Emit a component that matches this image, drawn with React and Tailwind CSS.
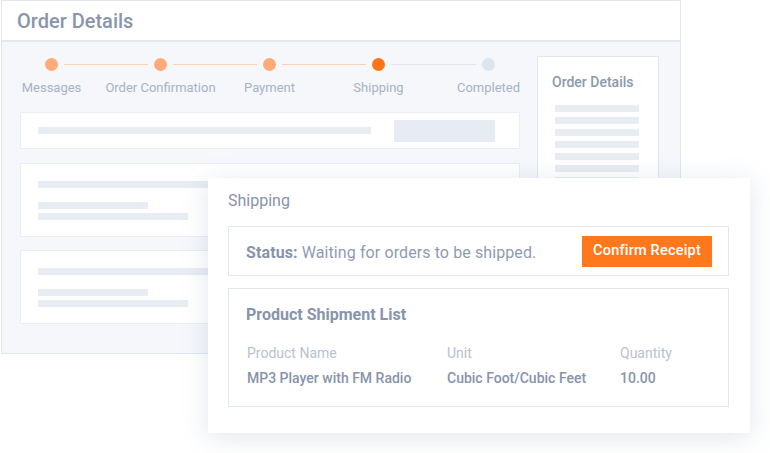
import React from 'react';

const steps = [
  { label: 'Messages', state: 'done' },
  { label: 'Order Confirmation', state: 'done' },
  { label: 'Payment', state: 'done' },
  { label: 'Shipping', state: 'active' },
  { label: 'Completed', state: 'todo' },
];

const dotColor = {
  done: 'bg-[#fdab78]',
  active: 'bg-[#ff7417]',
  todo: 'bg-[#dee4ee]',
};

function Bar({ className }) {
  return <div className={`h-[7px] bg-[#e8ecf3] ${className}`} />;
}

function Stepper() {
  return (
    <div className="flex items-start pl-[25px]">
      {steps.map((s, i) => (
        <React.Fragment key={s.label}>
          <div className="flex w-[13px] flex-col items-center">
            <div className={`h-[13px] w-[13px] rounded-full ${dotColor[s.state]}`} />
            <div className="mt-[9px] whitespace-nowrap text-[13px] leading-4 text-[#a9b2c3]">{s.label}</div>
          </div>
          {i < steps.length - 1 && (
            <div className={`mx-[6px] mt-[6px] h-px ${i === 3 ? 'w-[85px]' : 'w-[84px]'} ${i === 3 ? 'bg-[#e1e6ee]' : 'bg-[#fbd2b4]'}`} />
          )}
        </React.Fragment>
      ))}
    </div>
  );
}

function PlaceholderCard() {
  return (
    <div className="h-[74px] border border-[#e9edf4] bg-white px-[17px] pt-[17px]">
      <Bar className="w-[333px]" />
      <Bar className="mt-[14px] w-[110px]" />
      <Bar className="mt-[4px] w-[150px]" />
    </div>
  );
}

function BackWindow() {
  return (
    <div className="absolute left-[1px] top-0 h-[354px] w-[680px] border border-[#e1e6ef] bg-[#f5f7fb]">
      <div className="flex h-[41px] items-center border-b-2 border-[#e3e7ee] bg-white pl-[15px]">
        <h1 className="text-[20px] font-medium text-[#8995aa]">Order Details</h1>
      </div>
      <div className="flex gap-[17px] pl-[18px] pt-[14px]">
        <div className="w-[500px]">
          <div className="pt-[2px]">
            <Stepper />
          </div>
          <div className="mt-[16px] flex h-[37px] items-center border border-[#e9edf4] bg-white pl-[17px] pr-[24px]">
            <Bar className="w-[333px]" />
            <div className="ml-auto h-[22px] w-[101px] bg-[#e7ebf3]" />
          </div>
          <div className="mt-[14px] flex flex-col gap-[13px]">
            <PlaceholderCard />
            <PlaceholderCard />
          </div>
        </div>
        <div className="h-[266px] w-[122px] border border-[#e1e6ef] bg-white pl-[14px] pt-[15px]">
          <div className="text-[14px] font-medium text-[#8c98ad]">Order Details</div>
          <div className="mt-[12px] flex flex-col gap-[5px] pl-[3px]">
            {Array.from({ length: 8 }).map((_, i) => (
              <Bar key={i} className="w-[84px]" />
            ))}
          </div>
        </div>
      </div>
    </div>
  );
}

function ShippingPanel() {
  return (
    <div className="absolute left-[208px] top-[178px] h-[255px] w-[542px] bg-white pl-[20px] pr-[21px] pt-[13px] shadow-[0_4px_24px_rgba(120,135,165,0.22)]">
      <div className="text-[16px] leading-5 text-[#8794aa]">Shipping</div>
      <div className="mt-[15px] flex h-[50px] items-center justify-between border border-[#e1e6ef] pl-[17px] pr-[16px]">
        <div className="pt-[3px] text-[16px] tracking-[0.1px] text-[#8f9bb0]">
          <span className="font-bold text-[#8794aa]">Status:</span> Waiting for orders to be shipped.
        </div>
        <button className="h-[31px] w-[130px] bg-[#ff781c] text-[14.5px] font-medium tracking-[0.2px] text-white">Confirm Receipt</button>
      </div>
      <div className="mt-[12px] h-[119px] border border-[#e1e6ef] pl-[17px] pt-[14px]">
        <div className="text-[16px] font-bold text-[#8794aa]">Product Shipment List</div>
        <div className="mt-[16px] grid grid-cols-[200px_173px_1fr] pl-[1px] text-[14px] leading-5">
          <div className="text-[#b9c1cf]">Product Name</div>
          <div className="text-[#b9c1cf]">Unit</div>
          <div className="text-[#b9c1cf]">Quantity</div>
          <div className="mt-[5px] font-medium text-[#8794aa]">MP3 Player with FM Radio</div>
          <div className="mt-[5px] font-medium text-[#8794aa]">Cubic Foot/Cubic Feet</div>
          <div className="mt-[5px] font-medium text-[#8794aa]">10.00</div>
        </div>
      </div>
    </div>
  );
}

export default function App() {
  return (
    <div className="relative h-[453px] w-[770px] overflow-hidden bg-white" style={{ fontFamily: 'Roboto, "Liberation Sans", sans-serif' }}>
      <BackWindow />
      <ShippingPanel />
    </div>
  );
}
